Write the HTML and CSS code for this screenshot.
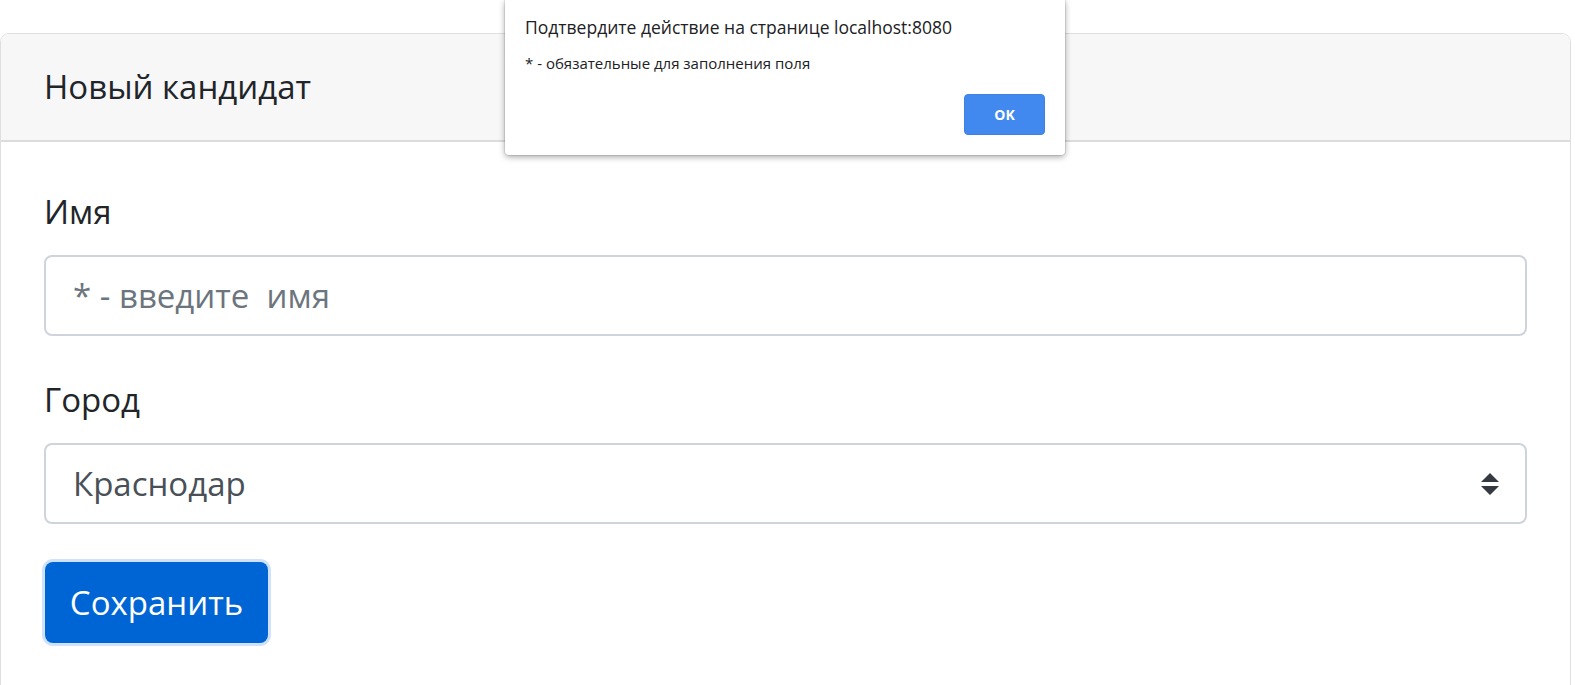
FILE: index.html
```html
<!DOCTYPE html>
<html lang="ru">
<head>
<meta charset="utf-8">
<title>Новый кандидат</title>
<link rel="stylesheet" href="styles.css">
</head>
<body>
<div class="page">
  <div class="card">
    <div class="card-header">Новый кандидат</div>
    <form class="card-body">
      <label class="label" for="name">Имя</label>
      <div class="control"><span class="placeholder">* - введите&nbsp; имя</span></div>
      <label class="label label-city" for="city">Город</label>
      <div class="control select">
        <span class="value">Краснодар</span>
        <svg class="arrows" width="18" height="22" viewBox="0 0 18 22"><path d="M9 0 L18 9 L0 9 Z M0 13 L18 13 L9 22 Z" fill="#343a40"/></svg>
      </div>
      <div class="actions"><button type="button" class="btn">Сохранить</button></div>
    </form>
  </div>

  <div class="dialog">
    <div class="dialog-title">Подтвердите действие на странице localhost:8080</div>
    <div class="dialog-msg">* - обязательные для заполнения поля</div>
    <div class="dialog-actions"><button type="button" class="ok">OK</button></div>
  </div>
</div>
</body>
</html>
```

FILE: styles.css
```css
html, body {
  margin: 0;
  padding: 0;
  background: #fff;
}
body {
  font-family: "Open Sans", "Noto Sans", sans-serif;
  color: #212529;
  overflow: hidden;
  height: 685px;
}
.page {
  position: relative;
  padding-top: 33px;
}
.card {
  width: 1571px;
  box-sizing: border-box;
  border: 1px solid #dfdfdf;
  border-radius: 9px;
  overflow: hidden;
  height: 700px;
}
.card-header {
  background: #f7f7f7;
  border-bottom: 2px solid #dcdcdc;
  height: 108px;
  box-sizing: border-box;
  padding: 0 0 0 43px;
  display: flex;
  align-items: center;
  font-size: 33px;
  line-height: 1.5;
}
.card-body {
  display: flex;
  flex-direction: column;
  padding: 43px 43px 0 43px;
  margin: 0;
}
.label {
  font-size: 33px;
  line-height: 54px;
  margin-bottom: 16px;
}
.label-city {
  margin-top: 37px;
}
.control {
  height: 81px;
  box-sizing: border-box;
  border: 2px solid #ced4da;
  border-radius: 8px;
  display: flex;
  align-items: center;
  padding: 0 27px;
  font-size: 33px;
  color: #495057;
}
.placeholder {
  color: #6c757d;
}
.select {
  justify-content: space-between;
  padding-right: 26px;
}
.arrows {
  display: block;
}
.actions {
  margin-top: 38px;
  display: flex;
}
.btn {
  font-family: inherit;
  font-size: 33px;
  color: #fff;
  background: #0065d4;
  border: none;
  border-radius: 8px;
  height: 81px;
  width: 223px;
  box-shadow: 0 0 0 3px #cfe1fb;
  margin-left: 1px;
  padding: 0;
}
.dialog {
  position: absolute;
  left: 505px;
  top: 0;
  width: 560px;
  height: 155px;
  box-sizing: border-box;
  background: #fff;
  border-radius: 0 0 4px 4px;
  box-shadow: 0 2px 6px rgba(0,0,0,.35), 0 0 0 1px rgba(0,0,0,.08);
  padding: 13px 20px 0 20px;
  display: flex;
  flex-direction: column;
}
.dialog-title {
  font-size: 17.5px;
  color: #202124;
  line-height: 28px;
}
.dialog-msg {
  font-size: 15px;
  color: #202124;
  margin-top: 12px;
  line-height: 20px;
}
.dialog-actions {
  display: flex;
  justify-content: flex-end;
  margin-top: 21px;
}
.ok {
  width: 81px;
  height: 41px;
  background: #4289ef;
  color: #fff;
  border: 1px solid #3f81df;
  border-radius: 4px;
  font-family: inherit;
  font-weight: 700;
  font-size: 14px;
  padding: 0;
}
```
